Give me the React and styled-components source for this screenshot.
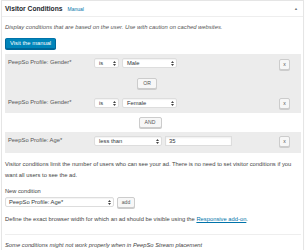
import React from "react";
import styled, { createGlobalStyle } from "styled-components";

const Global = createGlobalStyle`
  html, body { margin: 0; padding: 0; background: #fff; }
  body { font-family: "Liberation Sans", Arial, sans-serif; color: #444; }
  * { box-sizing: border-box; }
`;

const Panel = styled.div`
  margin: 0 0 0 1px;
  width: 303px;
  border: 1px solid #e5e5e5;
  background: #fff;
  box-shadow: 0 1px 1px rgba(0,0,0,.04);
`;

const Header = styled.div`
  height: 16px;
  display: flex;
  align-items: center;
  padding: 0 5px 0 3px;
  border-bottom: 1px solid #eee;
`;

const Title = styled.span`
  font-size: 6.7px;
  font-weight: bold;
  color: #23282d;
`;

const SmallLink = styled.a`
  font-size: 5px;
  color: #0073aa;
  margin-left: 5px;
  text-decoration: none;
`;

const Toggle = styled.span`
  margin-left: auto;
  font-size: 4px;
  color: #72777c;
`;

const Body = styled.div`
  padding: 0 2px 0 3px;
`;

const Desc = styled.p`
  margin: 7px 0 0;
  font-size: 5.85px;
  font-style: italic;
  color: #555;
  line-height: 7px;
`;

const PrimaryButton = styled.button`
  display: block;
  margin-top: 7px;
  height: 11px;
  padding: 0 4px;
  background: #0085ba;
  border: 1px solid #0073aa;
  border-color: #0073aa #006799 #006799;
  border-radius: 2px;
  box-shadow: 0 1px 0 #006799;
  color: #fff;
  font-family: inherit;
  font-size: 5.8px;
  line-height: 9px;
`;

const Group = styled.div`
  margin-top: ${p => p.$mt}px;
  background: #ececec;
  padding: ${p => p.$pt}px 11px ${p => p.$pb}px 3px;
`;

const Row = styled.div`
  display: flex;
  align-items: flex-start;
  height: 11px;
`;

const Label = styled.span`
  width: 86px;
  flex: none;
  font-size: 5.8px;
  color: #555;
  line-height: 7px;
  padding-top: 1px;
`;

const SelectBox = styled.span`
  flex: none;
  display: flex;
  align-items: center;
  justify-content: space-between;
  width: ${p => p.$w}px;
  height: 10px;
  margin-right: 3px;
  padding: 0 2px 0 ${p => p.$pl || 4}px;
  background: #fff;
  border: 1px solid #ddd;
  border-radius: 2px;
  box-shadow: inset 0 1px 1px rgba(0,0,0,.05);
  font-size: 5.8px;
  color: #32373c;
`;

const Arrows = () => (
  <svg width="3" height="5" viewBox="0 0 3 5">
    <path d="M1.5 0 L3 2 L0 2 Z M0 3 L3 3 L1.5 5 Z" fill="#444" />
  </svg>
);

const Select = ({ w, pl, children }) => (
  <SelectBox $w={w} $pl={pl}>
    <span>{children}</span>
    <Arrows />
  </SelectBox>
);

const TextInput = styled.span`
  flex: none;
  display: flex;
  align-items: center;
  width: ${p => p.$w}px;
  height: 10px;
  padding-left: 3px;
  background: #fff;
  border: 1px solid #ddd;
  box-shadow: inset 0 1px 2px rgba(0,0,0,.07);
  font-size: 5.8px;
  color: #32373c;
`;

const SmallButton = styled.button`
  flex: none;
  height: 11px;
  width: ${p => p.$w}px;
  padding: 0;
  margin: ${p => p.$m || 0};
  background: #f7f7f7;
  border: 1px solid #ccc;
  border-radius: 2px;
  box-shadow: 0 1px 0 #ccc;
  color: #555;
  font-family: inherit;
  font-size: 5.1px;
  line-height: 9px;
  display: block;
`;

const Spacer = styled.span`
  flex: 1;
`;

const Center = styled.div`
  display: flex;
  justify-content: center;
  padding-right: ${p => p.$pr || 0}px;
  margin: ${p => p.$m};
`;

const Para = styled.p`
  margin: ${p => p.$m};
  font-size: 5.8px;
  line-height: 11px;
  color: #444;
  font-style: ${p => (p.$italic ? "italic" : "normal")};
`;

const FieldLabel = styled.div`
  margin-top: 7px;
  font-size: 5.7px;
  line-height: 7px;
  color: #444;
`;

const AddRow = styled.div`
  display: flex;
  align-items: flex-start;
  margin-top: 2px;
`;

const Link = styled.a`
  color: #0073aa;
  text-decoration: underline;
`;

const Divider = styled.hr`
  margin: 9px 0 0;
  border: 0;
  border-top: 1px solid #eee;
`;

export default function App() {
  return (
    <>
      <Global />
      <Panel>
        <Header>
          <Title>Visitor Conditions</Title>
          <SmallLink href="#">Manual</SmallLink>
          <Toggle>▲</Toggle>
        </Header>
        <Body>
          <Desc>Display conditions that are based on the user. Use with caution on cached websites.</Desc>
          <PrimaryButton>Visit the manual</PrimaryButton>
          <Group $mt={5} $pt={4} $pb={4}>
            <Row>
              <Label>PeepSo Profile: Gender*</Label>
              <Select w={25}>is</Select>
              <Select w={55}>Male</Select>
              <Spacer />
              <SmallButton $w={11} $m="1px 0 0">x</SmallButton>
            </Row>
            <Center $pr={4} $m="9px 0 9px">
              <SmallButton $w={20}>OR</SmallButton>
            </Center>
            <Row>
              <Label>PeepSo Profile: Gender*</Label>
              <Select w={25}>is</Select>
              <Select w={55}>Female</Select>
              <Spacer />
              <SmallButton $w={11}>x</SmallButton>
            </Row>
          </Group>
          <Center $pr={6} $m="4px 0 0">
            <SmallButton $w={23}>AND</SmallButton>
          </Center>
          <Group $mt={4} $pt={4} $pb={6}>
            <Row>
              <Label>PeepSo Profile: Age*</Label>
              <Select w={68}>less than</Select>
              <TextInput $w={67}>35</TextInput>
              <Spacer />
              <SmallButton $w={11}>x</SmallButton>
            </Row>
          </Group>
          <Para $m="6px 0 0">
            Visitor conditions limit the number of users who can see your ad. There is no need to set visitor conditions if you want all users to see the ad.
          </Para>
          <FieldLabel>New condition</FieldLabel>
          <AddRow>
            <Select w={109} pl={3}>PeepSo Profile: Age*</Select>
            <SmallButton $w={18}>add</SmallButton>
          </AddRow>
          <Para $m="6px 0 0">
            Define the exact browser width for which an ad should be visible using the <Link href="#">Responsive add-on</Link>.
          </Para>
          <Divider />
          <Para $m="5px 0 0" $italic>
            Some conditions might not work properly when in PeepSo Stream placement
          </Para>
        </Body>
      </Panel>
    </>
  );
}
